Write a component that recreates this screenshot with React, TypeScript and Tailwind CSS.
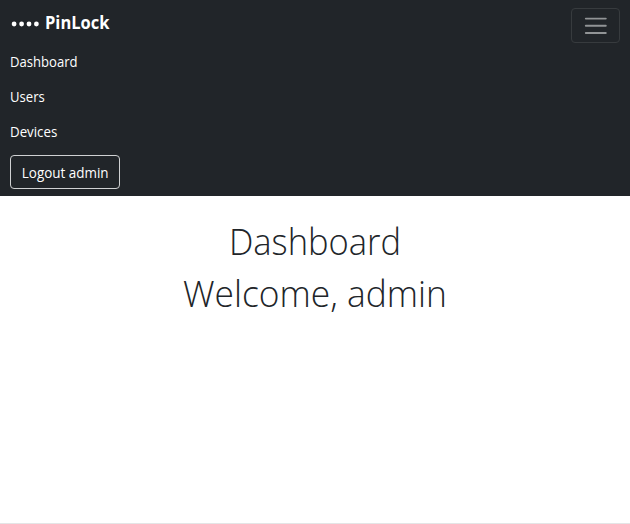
export default function App() {
  return (
    <div className="flex h-[524px] w-[630px] flex-col overflow-hidden border-b border-[#e4e5e6] bg-white font-['Open_Sans','Noto_Sans',sans-serif] text-[#212529]">
      <nav className="flex h-[196px] shrink-0 items-start justify-between bg-[#212529] px-[10px] text-white">
        <div className="flex flex-col items-start">
          <a className="flex h-[45px] items-center gap-[5px] text-[17px] font-bold">
            <svg className="mt-[3px]" width="30" height="6" viewBox="0 0 30 6" fill="currentColor">
              <circle cx="4.1" cy="3" r="2.4" />
              <circle cx="11.6" cy="3" r="2.4" />
              <circle cx="19" cy="3" r="2.4" />
              <circle cx="26.4" cy="3" r="2.4" />
            </svg>
            <span className="origin-left scale-x-[0.97]">PinLock</span>
          </a>
          <a className="flex h-[35px] origin-left scale-x-[0.935] items-center pb-[2px] text-[14px]">Dashboard</a>
          <a className="flex h-[35px] origin-left scale-x-[0.935] items-center pb-[2px] text-[14px]">Users</a>
          <a className="flex h-[35px] origin-left scale-x-[0.95] items-center pb-[2px] text-[14px]">Devices</a>
          <button className="mt-[5px] flex h-[34px] w-[110px] items-center justify-center rounded-[4px] border border-[#cfd1d2] text-[14px] whitespace-nowrap">
            <span className="scale-x-[0.96]">Logout admin</span>
          </button>
        </div>
        <button className="mt-2 flex h-[35px] w-[49px] items-center justify-center rounded-[4px] border border-[#373b3e]">
          <svg width="26" height="26" viewBox="0 0 26 26" stroke="#919496" strokeWidth="1.9" strokeLinecap="round">
            <path d="M2.8 5.6h20M2.8 12.8h20M2.8 20h20" />
          </svg>
        </button>
      </nav>
      <main className="pt-[19px] text-center text-[37.5px] leading-[52px] font-light">
        <h1 className="scale-x-[0.92]">Dashboard</h1>
        <h1 className="scale-x-[0.943]">Welcome, admin</h1>
      </main>
    </div>
  );
}
